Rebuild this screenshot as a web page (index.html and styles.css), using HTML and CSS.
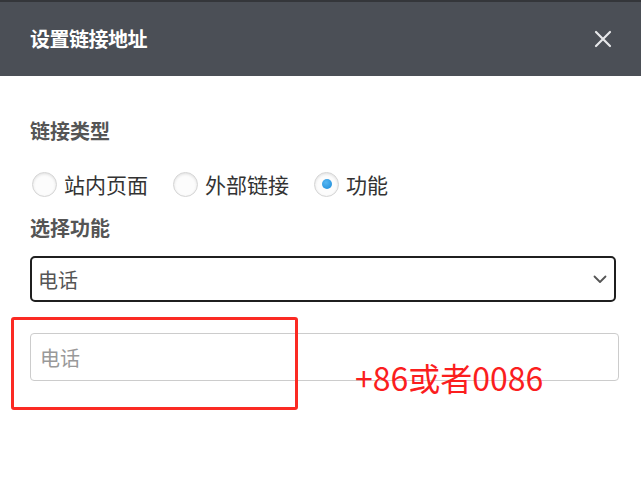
FILE: index.html
```html
<!DOCTYPE html>
<html lang="zh-CN">
<head>
<meta charset="utf-8">
<title>设置链接地址</title>
<link rel="stylesheet" href="styles.css">
</head>
<body>
<div class="dialog">
  <header class="dialog-header">
    <h1 class="dialog-title">设置链接地址</h1>
    <span class="close-btn" aria-label="关闭">
      <svg width="18" height="18" viewBox="0 0 18 18"><path d="M2 2 L16 16 M16 2 L2 16" stroke="#e6e7e9" stroke-width="2.2" stroke-linecap="round" fill="none"/></svg>
    </span>
  </header>
  <main class="dialog-body">
    <div class="field-label first">链接类型</div>
    <div class="radio-row">
      <label class="radio"><span class="radio-circle"></span><span class="radio-text">站内页面</span></label>
      <label class="radio"><span class="radio-circle"></span><span class="radio-text">外部链接</span></label>
      <label class="radio"><span class="radio-circle checked"><span class="radio-dot"></span></span><span class="radio-text">功能</span></label>
    </div>
    <div class="field-label second">选择功能</div>
    <div class="select">
      <span class="select-value">电话</span>
      <svg class="chevron" width="14" height="9" viewBox="0 0 14 9"><path d="M1.5 1.5 L7 7 L12.5 1.5" stroke="#555" stroke-width="1.8" fill="none" stroke-linecap="round" stroke-linejoin="round"/></svg>
    </div>
    <div class="input"><span class="placeholder">电话</span></div>
  </main>
  <div class="annot-box"></div>
  <div class="annot-text">+86或者0086</div>
</div>
</body>
</html>
```
FILE: styles.css
```css
html, body {
  margin: 0;
  padding: 0;
  background: #ffffff;
}
body {
  font-family: "Noto Sans CJK SC", "Noto Sans", sans-serif;
  width: 641px;
  height: 503px;
  overflow: hidden;
}
.dialog {
  position: relative;
  width: 641px;
  height: 503px;
}
.dialog-header {
  box-sizing: border-box;
  height: 76px;
  border-top: 2px solid #34363a;
  background: #4b4f56;
  display: flex;
  align-items: center;
  justify-content: space-between;
  padding: 0 29px 0 30px;
}
.dialog-title {
  margin: 0;
  font-size: 20px;
  line-height: 24px;
  font-weight: 700;
  color: #ffffff;
  letter-spacing: -0.5px;
}
.close-btn {
  display: flex;
  width: 18px;
  height: 18px;
}
.dialog-body {
  padding: 0 0 0 30px;
}
.field-label {
  font-size: 20px;
  line-height: 24px;
  font-weight: 700;
  color: #555555;
}
.field-label.first {
  margin-top: 43px;
}
.field-label.second {
  margin-top: 17px;
}
.radio-row {
  display: flex;
  align-items: center;
  gap: 23px;
  margin-top: 26px;
  height: 30px;
}
.radio {
  display: flex;
  align-items: center;
  gap: 7px;
}
.radio-circle {
  box-sizing: border-box;
  width: 25px;
  height: 25px;
  margin-left: 2px;
  border-radius: 50%;
  border: 1px solid #d4d4d4;
  background: #fcfcfc;
  box-shadow: inset 0 1px 3px rgba(0,0,0,0.12);
  display: flex;
  align-items: center;
  justify-content: center;
}
.radio-dot {
  width: 10px;
  height: 10px;
  border-radius: 50%;
  background: radial-gradient(circle at 40% 35%, #55b6f2, #1a8ad8);
}
.radio-text {
  font-size: 21px;
  line-height: 30px;
  color: #333333;
}
.select {
  box-sizing: border-box;
  margin-top: 16px;
  width: 586px;
  height: 46px;
  border: 2px solid #1f1f1f;
  border-radius: 5px;
  display: flex;
  align-items: center;
  justify-content: space-between;
  padding: 0 7px 0 6px;
}
.select-value {
  font-size: 20px;
  color: #555555;
}
.input {
  box-sizing: border-box;
  margin-top: 31px;
  width: 589px;
  height: 48px;
  border: 1px solid #cccccc;
  border-radius: 4px;
  display: flex;
  align-items: center;
  padding: 0 9px;
}
.placeholder {
  font-size: 20px;
  color: #999999;
}
.annot-box {
  position: absolute;
  left: 11px;
  top: 317px;
  width: 287px;
  height: 93px;
  box-sizing: border-box;
  border: 3px solid #fb2a23;
  border-radius: 3px;
}
.annot-text {
  position: absolute;
  left: 355px;
  top: 355px;
  font-family: "Noto Sans CJK SC", "Noto Sans", sans-serif;
  font-size: 32px;
  line-height: 44px;
  color: #fb1e1e;
}
```
